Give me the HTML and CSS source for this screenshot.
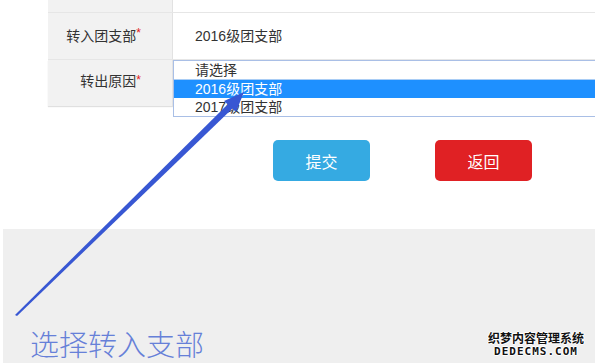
FILE: index.html
```html
<!DOCTYPE html>
<html lang="zh-CN">
<head>
    <meta charset="UTF-8">
    <meta name="viewport" content="width=device-width, initial-scale=1.0">
    <title>转入团支部</title>
    <link rel="stylesheet" href="styles.css">
</head>
<body>
<div class="page">
    <div class="form">
        <div class="row row-top">
            <div class="label"></div>
            <div class="value"></div>
        </div>
        <div class="row">
            <div class="label">转入团支部<span class="req">*</span></div>
            <div class="value">2016级团支部</div>
        </div>
        <div class="row row-last">
            <div class="label">转出原因<span class="req">*</span></div>
            <div class="value value-select">
                <div class="listbox">
                    <div class="option">请选择</div>
                    <div class="option selected">2016级团支部</div>
                    <div class="option">2017级团支部</div>
                </div>
            </div>
        </div>
    </div>

    <div class="actions">
        <button class="btn btn-submit" type="button">提交</button>
        <button class="btn btn-back" type="button">返回</button>
    </div>

    <div class="note">
        <p class="caption">选择转入支部</p>
        <div class="watermark">
            <div class="wm-cn">织梦内容管理系统</div>
            <div class="wm-en">DEDECMS.COM</div>
        </div>
    </div>

    <!-- pointer arrow drawn over the form -->
    <svg class="arrow" width="595" height="363" viewBox="0 0 595 363">
        <polygon points="15,315 17,316 233,108 229,103" fill="#3857d3"/>
        <polygon points="244,92 224,101 236,112" fill="#3857d3"/>
    </svg>
</div>
</body>
</html>
```

FILE: styles.css
```css
body {
    margin: 0;
    font-family: "Liberation Sans", "Noto Sans CJK SC", sans-serif;
    font-size: 14px;
    color: #333;
    background: #fff;
}

.page {
    position: relative;
    width: 595px;
    height: 363px;
    overflow: hidden;
}

.form {
    margin-left: 48px;
}

.row {
    display: flex;
    height: 46px;
    border-bottom: 1px solid #e6e6e6;
}

.row-top {
    height: 12px;
}

.row-last {
    border-bottom: none;
}

.label {
    width: 125px;
    flex: none;
    box-sizing: border-box;
    background: #f2f2f2;
    border-right: 1px solid #e2e2e2;
    text-align: right;
    padding-right: 31px;
    line-height: 46px;
}

.row-last .label {
    line-height: 42px;
    box-shadow: 0 1px 1px rgba(0, 0, 0, 0.12);
}

.req {
    color: #e02020;
    vertical-align: top;
    font-size: 12px;
    line-height: 40px;
}

.value {
    flex: 1;
    padding-left: 22px;
    line-height: 46px;
}

.value-select {
    padding-left: 0;
    line-height: normal;
}

.listbox {
    height: 55px;
    border: 1px solid #a9bfe6;
    border-right: none;
    background: #fff;
}

.option {
    height: 18px;
    line-height: 18px;
    padding-left: 21px;
}

.option.selected {
    background: #1e90ff;
    color: #fff;
    border-top: 1px solid #a9cdf5;
}

.actions {
    display: flex;
    gap: 65px;
    padding-left: 273px;
    margin-top: 34px;
}

.btn {
    width: 97px;
    height: 41px;
    border: none;
    border-radius: 5px;
    color: #fff;
    font-family: "Noto Sans CJK SC", sans-serif;
    font-size: 16px;
    cursor: pointer;
}

.btn-submit {
    background: #35aae2;
}

.btn-back {
    background: #e02124;
}

.note {
    position: relative;
    margin: 48px 0 0 3px;
    height: 135px;
    background: #efefef;
}

.caption {
    margin: 0;
    padding: 97px 0 0 27px;
    font-family: "Noto Sans CJK SC", serif;
    font-weight: 300;
    font-size: 29px;
    line-height: 34px;
    color: #6680d8;
}

.watermark {
    position: absolute;
    right: 11px;
    bottom: 6px;
    text-align: center;
    font-weight: bold;
    color: #111;
    text-shadow: 1px 0 0 #fff, -1px 0 0 #fff, 0 1px 0 #fff, 0 -1px 0 #fff;
}

.wm-cn {
    font-family: "Noto Sans CJK SC", sans-serif;
    font-size: 12px;
    line-height: 15px;
}

.wm-en {
    font-family: "DejaVu Sans Mono", monospace;
    font-size: 11px;
    letter-spacing: 1px;
    line-height: 13px;
}

.arrow {
    position: absolute;
    left: 0;
    top: 0;
    pointer-events: none;
}
```
